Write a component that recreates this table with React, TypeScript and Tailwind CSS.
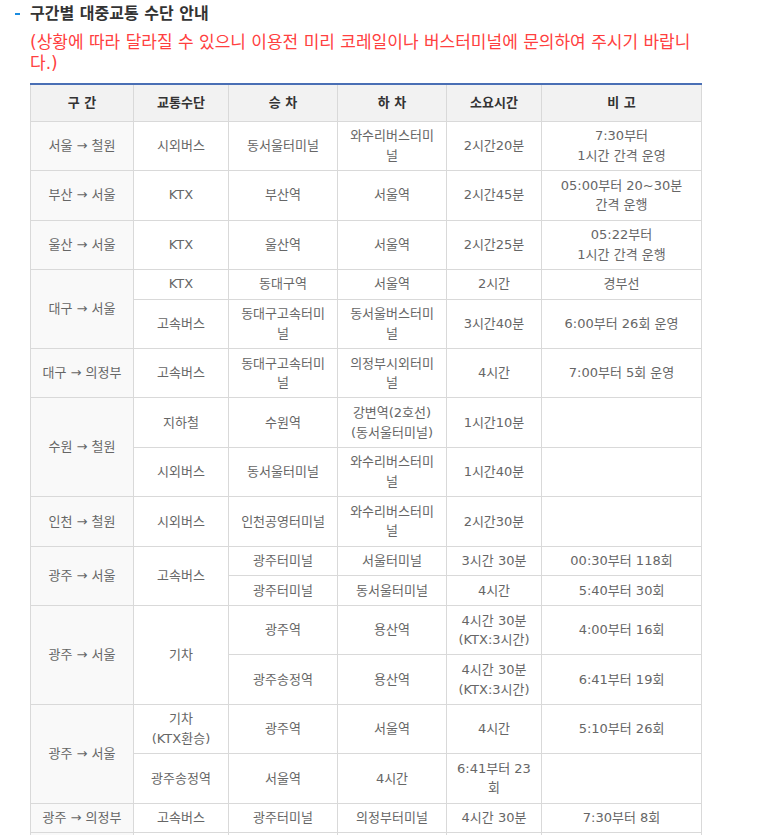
import React from 'react';

const font = { fontFamily: '"DejaVu Sans", "Noto Sans CJK KR", sans-serif' };

function Th({ children }: { children: React.ReactNode }) {
  return (
    <th className="border border-[#d9d9d9] bg-[#f2f2f2] px-[9px] py-[8px] text-center align-middle text-[13px] font-bold leading-[19.7px] text-[#333]">
      {children}
    </th>
  );
}

function Td({
  children,
  rowSpan,
  head,
}: {
  children?: React.ReactNode;
  rowSpan?: number;
  head?: boolean;
}) {
  return (
    <td
      rowSpan={rowSpan}
      className={
        'border border-[#d9d9d9] px-[9px] py-[4.5px] text-center align-middle text-[13px] leading-[19.7px] text-[#666] ' +
        (head ? 'bg-[#f9f9f9]' : 'bg-white')
      }
    >
      {children}
    </td>
  );
}

export default function App() {
  return (
    <div className="min-h-screen bg-white pl-[15px] pt-[3px]" style={font}>
      <div className="flex items-center">
        <span className="h-[2px] w-[5px] bg-[#1a8ce0]" />
        <h3 className="ml-[10px] text-[16px] font-bold leading-[22px] text-[#333]">구간별 대중교통 수단 안내</h3>
      </div>
      <p className="ml-[15px] mt-[7px] w-[672px] text-[17px] leading-[21px] text-[#ff4040]">
        (상황에 따라 달라질 수 있으니 이용전 미리 코레일이나 버스터미널에 문의하여 주시기 바랍니다.)
      </p>

      <table className="ml-[15px] mt-[9px] w-[671px] table-fixed border-collapse border-t-2 border-t-[#4a6fb5]">
        <colgroup>
          <col className="w-[103px]" />
          <col className="w-[95px]" />
          <col className="w-[109px]" />
          <col className="w-[109px]" />
          <col className="w-[95px]" />
          <col className="w-[160px]" />
        </colgroup>
        <thead>
          <tr>
            <Th>구 간</Th>
            <Th>교통수단</Th>
            <Th>승 차</Th>
            <Th>하 차</Th>
            <Th>소요시간</Th>
            <Th>비 고</Th>
          </tr>
        </thead>
        <tbody>
          <tr>
            <Td head>서울 → 철원</Td>
            <Td>시외버스</Td>
            <Td>동서울터미널</Td>
            <Td>와수리버스터미널</Td>
            <Td>2시간20분</Td>
            <Td>7:30부터<br />1시간 간격 운영</Td>
          </tr>
          <tr>
            <Td head>부산 → 서울</Td>
            <Td>KTX</Td>
            <Td>부산역</Td>
            <Td>서울역</Td>
            <Td>2시간45분</Td>
            <Td>05:00부터 20~30분<br />간격 운행</Td>
          </tr>
          <tr>
            <Td head>울산 → 서울</Td>
            <Td>KTX</Td>
            <Td>울산역</Td>
            <Td>서울역</Td>
            <Td>2시간25분</Td>
            <Td>05:22부터<br />1시간 간격 운행</Td>
          </tr>
          <tr>
            <Td head rowSpan={2}>대구 → 서울</Td>
            <Td>KTX</Td>
            <Td>동대구역</Td>
            <Td>서울역</Td>
            <Td>2시간</Td>
            <Td>경부선</Td>
          </tr>
          <tr>
            <Td>고속버스</Td>
            <Td>동대구고속터미널</Td>
            <Td>동서울버스터미널</Td>
            <Td>3시간40분</Td>
            <Td>6:00부터 26회 운영</Td>
          </tr>
          <tr>
            <Td head>대구 → 의정부</Td>
            <Td>고속버스</Td>
            <Td>동대구고속터미널</Td>
            <Td>의정부시외터미널</Td>
            <Td>4시간</Td>
            <Td>7:00부터 5회 운영</Td>
          </tr>
          <tr>
            <Td head rowSpan={2}>수원 → 철원</Td>
            <Td>지하철</Td>
            <Td>수원역</Td>
            <Td>강변역(2호선)<br />(동서울터미널)</Td>
            <Td>1시간10분</Td>
            <Td />
          </tr>
          <tr>
            <Td>시외버스</Td>
            <Td>동서울터미널</Td>
            <Td>와수리버스터미널</Td>
            <Td>1시간40분</Td>
            <Td />
          </tr>
          <tr>
            <Td head>인천 → 철원</Td>
            <Td>시외버스</Td>
            <Td>인천공영터미널</Td>
            <Td>와수리버스터미널</Td>
            <Td>2시간30분</Td>
            <Td />
          </tr>
          <tr>
            <Td head rowSpan={2}>광주 → 서울</Td>
            <Td rowSpan={2}>고속버스</Td>
            <Td>광주터미널</Td>
            <Td>서울터미널</Td>
            <Td>3시간 30분</Td>
            <Td>00:30부터 118회</Td>
          </tr>
          <tr>
            <Td>광주터미널</Td>
            <Td>동서울터미널</Td>
            <Td>4시간</Td>
            <Td>5:40부터 30회</Td>
          </tr>
          <tr>
            <Td head rowSpan={2}>광주 → 서울</Td>
            <Td rowSpan={2}>기차</Td>
            <Td>광주역</Td>
            <Td>용산역</Td>
            <Td>4시간 30분<br />(KTX:3시간)</Td>
            <Td>4:00부터 16회</Td>
          </tr>
          <tr>
            <Td>광주송정역</Td>
            <Td>용산역</Td>
            <Td>4시간 30분<br />(KTX:3시간)</Td>
            <Td>6:41부터 19회</Td>
          </tr>
          <tr>
            <Td head rowSpan={2}>광주 → 서울</Td>
            <Td>기차<br />(KTX환승)</Td>
            <Td>광주역</Td>
            <Td>서울역</Td>
            <Td>4시간</Td>
            <Td>5:10부터 26회</Td>
          </tr>
          <tr>
            <Td>광주송정역</Td>
            <Td>서울역</Td>
            <Td>4시간</Td>
            <Td>6:41부터 23<br />회</Td>
            <Td />
          </tr>
          <tr>
            <Td head>광주 → 의정부</Td>
            <Td>고속버스</Td>
            <Td>광주터미널</Td>
            <Td>의정부터미널</Td>
            <Td>4시간 30분</Td>
            <Td>7:30부터 8회</Td>
          </tr>
          <tr>
            <Td head>&nbsp;</Td>
            <Td />
            <Td />
            <Td />
            <Td />
            <Td />
          </tr>
        </tbody>
      </table>
    </div>
  );
}
